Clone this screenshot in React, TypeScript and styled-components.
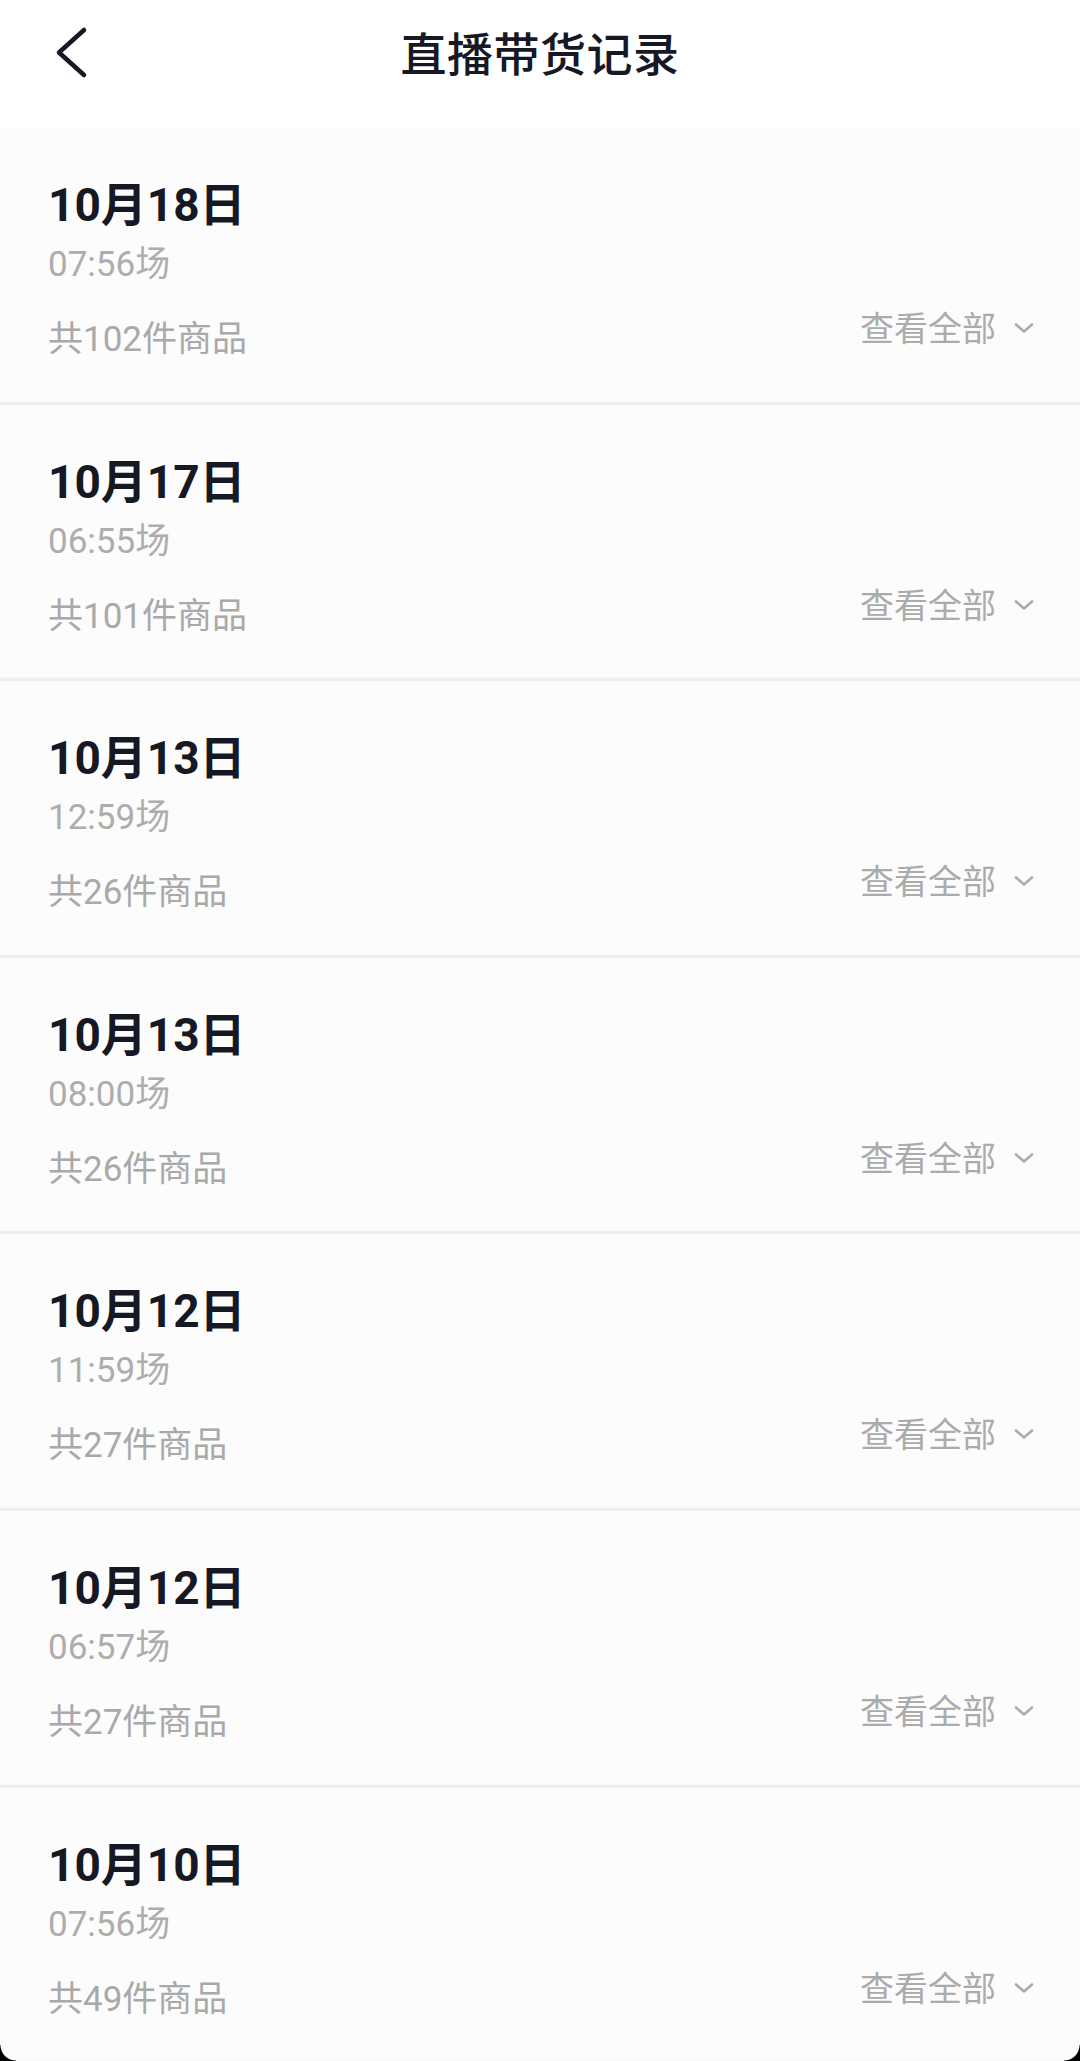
import React from "react";
import styled, { createGlobalStyle } from "styled-components";

const GlobalStyle = createGlobalStyle`
  html, body {
    margin: 0;
    padding: 0;
    overflow: hidden;
    background: #fcfcfc;
  }
  * {
    box-sizing: border-box;
  }
  body {
    font-family: Roboto, "Noto Sans CJK SC", sans-serif;
  }
`;

type Session = {
  date: string;
  time: string;
  count: number;
};

const sessions: Session[] = [
  { date: "10月18日", time: "07:56场", count: 102 },
  { date: "10月17日", time: "06:55场", count: 101 },
  { date: "10月13日", time: "12:59场", count: 26 },
  { date: "10月13日", time: "08:00场", count: 26 },
  { date: "10月12日", time: "11:59场", count: 27 },
  { date: "10月12日", time: "06:57场", count: 27 },
  { date: "10月10日", time: "07:56场", count: 49 },
];

const Page = () => {
  return (
    <StyledWrapper>
      <GlobalStyle />
      <Header>
        <BackButton aria-label="返回">
          <svg width="36" height="54" viewBox="0 0 36 54" fill="none">
            <path
              d="M30 5 L5 27.5 L30 50"
              stroke="#161823"
              strokeWidth="4.5"
              strokeLinecap="round"
              strokeLinejoin="round"
            />
          </svg>
        </BackButton>
        <Title>直播带货记录</Title>
        <span />
      </Header>

      <List>
        {sessions.map((s, i) => (
          <Card key={i}>
            <DateText>{s.date}</DateText>
            <TimeText>{s.time}</TimeText>
            <BottomRow>
              <CountText>共{s.count}件商品</CountText>
              <ViewAll>
                查看全部
                <svg width="22" height="14" viewBox="0 0 22 14" fill="none">
                  <path
                    d="M3 3.5 L11 10.5 L19 3.5"
                    stroke="#ababab"
                    strokeWidth="2.6"
                    strokeLinecap="round"
                    strokeLinejoin="round"
                  />
                </svg>
              </ViewAll>
            </BottomRow>
          </Card>
        ))}
      </List>

      <Corner $side="left" />
      <Corner $side="right" />
    </StyledWrapper>
  );
};

const StyledWrapper = styled.div`
  width: 1080px;
  min-height: 2061px;
  background: #fcfcfc;
`;

const Header = styled.header`
  height: 128px;
  background: #ffffff;
  display: grid;
  grid-template-columns: 1fr auto 1fr;
  align-items: start;
  padding-top: 21px;
`;

const BackButton = styled.div`
  margin-left: 54px;
  margin-top: 4px;
  width: 36px;
  height: 54px;
  display: flex;

  svg {
    display: block;
  }
`;

const Title = styled.h1`
  margin: 0;
  font-family: "Noto Sans CJK SC", sans-serif;
  font-size: 46px;
  line-height: 60px;
  font-weight: 500;
  color: #161823;
  letter-spacing: 0.5px;
`;

const List = styled.div`
  display: flex;
  flex-direction: column;
`;

const Card = styled.section`
  height: 276.6px;
  background: #fcfcfc;
  border-bottom: 3px solid #efefef;
  box-shadow: inset 0 -3px 3px -2px rgba(0, 0, 0, 0.02);
  padding: 47px 45px 0 48px;
  display: flex;
  flex-direction: column;
`;

const DateText = styled.div`
  font-family: Roboto, "Noto Sans CJK SC", sans-serif;
  font-size: 46px;
  line-height: 60px;
  font-weight: 700;
  color: #161823;
`;

const TimeText = styled.div`
  margin-top: 8px;
  font-size: 35px;
  line-height: 44px;
  color: #adadad;
`;

const BottomRow = styled.div`
  margin-top: 18px;
  display: flex;
  justify-content: space-between;
  align-items: flex-end;
`;

const CountText = styled.div`
  font-size: 35px;
  line-height: 44px;
  color: #a9a9a9;
`;

const ViewAll = styled.div`
  display: flex;
  align-items: center;
  gap: 17px;
  margin-bottom: 13px;
  font-family: "Noto Sans CJK SC", sans-serif;
  font-size: 34px;
  line-height: 44px;
  color: #ababab;

  svg {
    display: block;
    margin-top: 2px;
  }
`;

const Corner = styled.div<{ $side: "left" | "right" }>`
  position: fixed;
  bottom: 0;
  ${(p) => (p.$side === "left" ? "left: 0;" : "right: 0;")}
  width: 16px;
  height: 16px;
  pointer-events: none;
  background: radial-gradient(
    circle at ${(p) => (p.$side === "left" ? "100% 0" : "0 0")},
    transparent 15px,
    #000 16px
  );
`;

export default function App() {
  return <Page />;
}
